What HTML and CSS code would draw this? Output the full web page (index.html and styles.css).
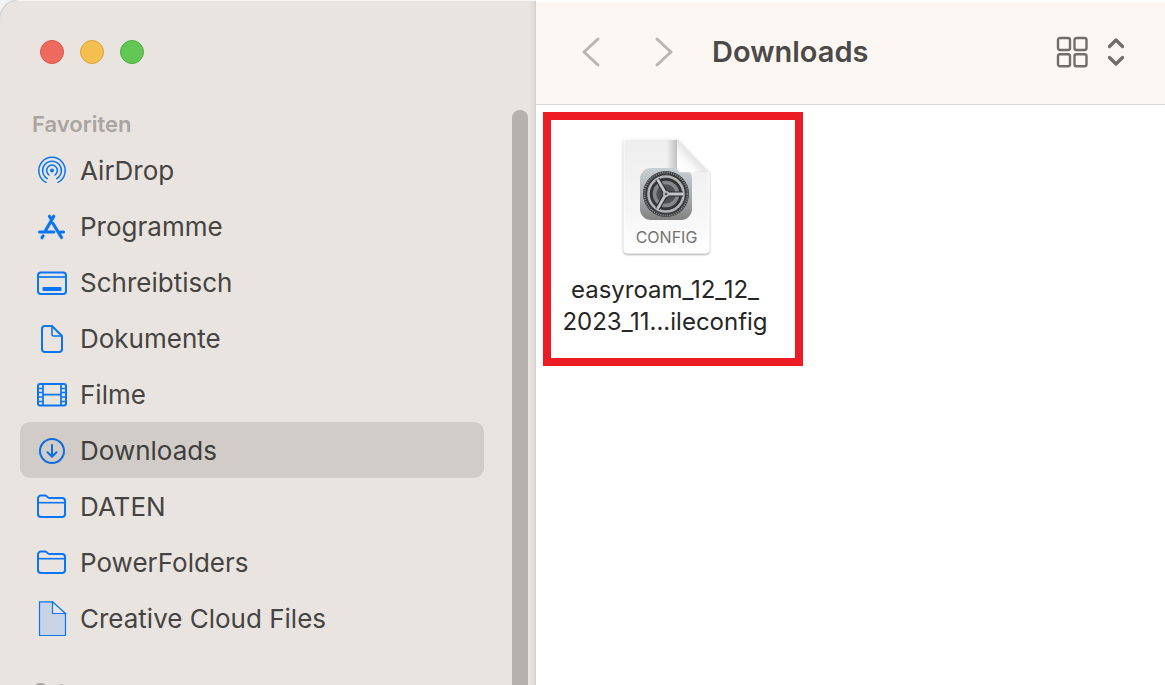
FILE: index.html
```html
<!DOCTYPE html>
<html lang="de">
<head>
<meta charset="utf-8">
<title>Downloads</title>
<link rel="stylesheet" href="styles.css">
</head>
<body>
<div class="window">
  <aside class="sidebar">
    <div class="lights">
      <button class="light light-close" aria-label="Schließen"></button>
      <button class="light light-min" aria-label="Minimieren"></button>
      <button class="light light-zoom" aria-label="Zoomen"></button>
    </div>
    <div class="side-body">
      <nav class="places">
        <h2 class="group">Favoriten</h2>
        <ul class="list">
          <li><a class="item" href="#"><svg class="icon" viewBox="0 0 32 36" fill="none" stroke="#0a75f5" stroke-width="1.500" stroke-linecap="round"><circle cx="16" cy="17.500" r="2" fill="#0a75f5" stroke="none"/><path d="M13 22a5.400 5.400 0 1 1 6 0M11.300 25.700a9.400 9.400 0 1 1 9.400 0M10 29.300a13.200 13.200 0 1 1 12 0"/></svg>AirDrop</a></li>
          <li><a class="item" href="#"><svg class="icon" viewBox="0 0 32 36" fill="none" stroke="#0a75f5" stroke-width="3.200" stroke-linecap="round"><path d="M13.500 7.300l1.800 2.800M17.800 7.300L9.600 21.500M3.500 23h14.300M24.500 23h3M17 14.500l8.500 14M7 27l-1 1.700"/></svg>Programme</a></li>
          <li><a class="item" href="#"><svg class="icon" viewBox="0 0 32 36" fill="none" stroke="#0a75f5" stroke-width="2"><rect x="2" y="7.500" width="28" height="21.500" rx="3"/><path d="M2 12h28" stroke-width="1.700"/><rect x="6.500" y="22" width="19" height="4" rx="1" fill="#0a75f5" stroke="none"/></svg>Schreibtisch</a></li>
          <li><a class="item" href="#"><svg class="icon" viewBox="0 0 32 36" fill="none" stroke="#0a75f5" stroke-width="2" stroke-linejoin="round"><path d="M9 5H16L26 15V28a3 3 0 0 1-3 3H9a3 3 0 0 1-3-3V8a3 3 0 0 1 3-3z"/><path d="M16 5V13.500a1.500 1.500 0 0 0 1.500 1.500H26" stroke-width="1.600"/></svg>Dokumente</a></li>
          <li><a class="item" href="#"><svg class="icon" viewBox="0 0 32 36" fill="none" stroke="#0a75f5" stroke-width="2"><rect x="2" y="7" width="28" height="21.500" rx="2"/><path d="M7 7.500v21M25 7.500v21M7 17.700h18M2 11.500h5M2 15.500h5M2 20h5M2 24.500h5M25 11.500h5M25 15.500h5M25 20h5M25 24.500h5" stroke-width="1.700"/></svg>Filme</a></li>
          <li><a class="item item-active" href="#" aria-current="page"><svg class="icon" viewBox="0 0 32 36" fill="none" stroke="#0a6de6" stroke-width="2" stroke-linecap="round" stroke-linejoin="round"><circle cx="16" cy="18" r="12"/><path d="M16 12v11.500M11.500 19.200l4.500 4.600 4.500-4.600"/></svg>Downloads</a></li>
          <li><a class="item" href="#"><svg class="icon" viewBox="0 0 32 36" fill="none" stroke="#0a75f5" stroke-width="2" stroke-linejoin="round"><path d="M2 9.500a3 3 0 0 1 3-3h4.200c1.500 0 2.300 2.400 4 2.400H26a3 3 0 0 1 3 3V25a3 3 0 0 1-3 3H5a3 3 0 0 1-3-3z"/><path d="M2 13.700h27" stroke-width="1.600"/></svg>DATEN</a></li>
          <li><a class="item" href="#"><svg class="icon" viewBox="0 0 32 36" fill="none" stroke="#0a75f5" stroke-width="2" stroke-linejoin="round"><path d="M2 9.500a3 3 0 0 1 3-3h4.200c1.500 0 2.300 2.400 4 2.400H26a3 3 0 0 1 3 3V25a3 3 0 0 1-3 3H5a3 3 0 0 1-3-3z"/><path d="M2 13.700h27" stroke-width="1.600"/></svg>PowerFolders</a></li>
          <li><a class="item" href="#"><svg class="icon" viewBox="0 0 32 36" stroke="#0a75f5" stroke-width="1.200"><path d="M3.500 .800H16.500L29.500 13.500V34.500H3.500z" fill="#c8d3e4"/><path d="M16.500 .800V12.500H29.500z" fill="#e9e4e0"/></svg>Creative Cloud Files</a></li>
        </ul>
        <h2 class="group group-next">Orte</h2>
      </nav>
      <div class="scroll-thumb"></div>
    </div>
  </aside>
  <main class="main">
    <header class="toolbar">
      <button class="tool" aria-label="Zurück"><svg width="24" height="32" viewBox="0 0 24 32" fill="none" stroke="#bab5b1" stroke-width="3" stroke-linecap="round" stroke-linejoin="round"><path d="M18 3L4 16l14 13"/></svg></button>
      <button class="tool tool-next" aria-label="Vorwärts"><svg width="24" height="32" viewBox="0 0 24 32" fill="none" stroke="#bab5b1" stroke-width="3" stroke-linecap="round" stroke-linejoin="round"><path d="M5 3l14 13L5 29"/></svg></button>
      <h1 class="title">Downloads</h1>
      <button class="tool view" aria-label="Darstellung"><svg width="72" height="32" viewBox="0 0 72 32" fill="none" stroke="#736d69" stroke-width="2.400" stroke-linecap="round" stroke-linejoin="round"><rect x="2" y="2" width="12" height="12" rx="2"/><rect x="18.500" y="2" width="12" height="12" rx="2"/><rect x="2" y="18.200" width="12" height="12" rx="2"/><rect x="18.500" y="18.200" width="12" height="12" rx="2"/><path d="M53.500 10.500l6.500-6.500 6.500 6.500M53.500 21.500l6.500 6.500 6.500-6.500" stroke-width="3.200"/></svg></button>
    </header>
    <section class="files">
      <figure class="file">
        <svg class="file-icon" width="96" height="124" viewBox="-1 0 96 124">
          <defs>
            <linearGradient id="page" x1="0" y1="0" x2="0" y2="1"><stop offset="0" stop-color="#eee"/><stop offset=".6" stop-color="#f5f5f5"/><stop offset="1" stop-color="#fff"/></linearGradient>
            <linearGradient id="crease" x1="0" x2="1"><stop offset="0" stop-color="#999" stop-opacity="0"/><stop offset="1" stop-color="#999" stop-opacity=".55"/></linearGradient>
            <linearGradient id="fold" x1="0" y1="1" x2=".6" y2=".4"><stop offset="0" stop-color="#fff"/><stop offset=".5" stop-color="#fafafa"/><stop offset="1" stop-color="#d8d8d8"/></linearGradient>
            <linearGradient id="plate" x1="0" y1="0" x2="0" y2="1"><stop offset="0" stop-color="#c7d0d5"/><stop offset=".5" stop-color="#adb0b2"/><stop offset="1" stop-color="#818181"/></linearGradient>
            <filter id="shade" x="-10%" y="-10%" width="120%" height="120%"><feDropShadow dx="0" dy="1" stdDeviation="1" flood-opacity=".45"/></filter>
          </defs>
          <path d="M9 4H59L91 37V115a3 3 0 0 1-3 3H9a3 3 0 0 1-3-3V7a3 3 0 0 1 3-3z" fill="url(#page)" stroke="#fff" stroke-width=".8" filter="url(#shade)"/>
          <path d="M49 5H59V37H49z" fill="url(#crease)"/>
          <path d="M59 37H90l-20-4z" fill="#999" opacity=".35"/>
          <rect x="22" y="33" width="52" height="52" rx="11" fill="url(#plate)"/>
          <path d="M59 4L91 37C80 36 68 38 62 37Q59 36 59 32z" fill="url(#fold)"/>
          <circle cx="48" cy="59" r="23" fill="#3a3b3c"/>
          <circle cx="48" cy="59" r="21.500" fill="none" stroke="#8b8e90" stroke-width="1.800" stroke-dasharray="1.100 1.150"/>
          <circle cx="48" cy="59" r="17.500" fill="#333435" stroke="#b2b5b7" stroke-width="2.600"/>
          <circle cx="48" cy="59" r="11.500" fill="#505254" stroke="#85888a" stroke-width="3.600"/>
          <circle cx="48" cy="59" r="6.500" fill="#484a4b"/>
          <path d="M48 59H65M48 59L39.500 44.300M48 59L39.500 73.700" stroke="#292a2b" stroke-width="5"/>
          <path d="M48 59H65M48 59L39.500 44.300M48 59L39.500 73.700" stroke="#c3c6c8" stroke-width="2.800"/>
          <circle cx="48" cy="59" r="3" fill="#b8bbbd"/><circle cx="48" cy="59" r="1.300" fill="#555"/>
          <text class="file-kind" x="48.500" y="108" text-anchor="middle">CONFIG</text>
        </svg>
        <figcaption class="file-name">easyroam_12_12_<br>2023_11...ileconfig</figcaption>
      </figure>
    </section>
  </main>
</div>
</body>
</html>
```
FILE: styles.css
```css
* { box-sizing: border-box; }
body {
  margin: 0;
  background: #f3f3f3;
  font-family: Inter, "Liberation Sans", sans-serif;
  color: #464442;
}
button { border: 0; padding: 0; background: none; }
.window {
  display: flex;
  height: 100vh;
  overflow: hidden;
  border-radius: 20px 0 0 0;
  background: #e9e4e0;
  box-shadow: 0 0 2px #777;
}
.sidebar {
  display: flex;
  flex-direction: column;
  flex: 0 0 536px;
  border-top: 1px solid #f8f6f5;
  background: linear-gradient(to left, #d2cdc9, #e0dbd7 2px, #e9e4e0 7px);
}
.lights {
  display: flex;
  flex: none;
  gap: 16px;
  height: 109px;
  padding: 39px 40px 0;
}
.light { width: 24px; height: 24px; border: 1px solid; border-radius: 50%; }
.light-close { background: #ed6a5f; border-color: #d9534a; }
.light-min { background: #f5bf50; border-color: #d9a13c; }
.light-zoom { background: #62c655; border-color: #4bab3d; }
.side-body { display: flex; flex: 1; min-height: 0; padding-right: 8px; }
.places { flex: 1; padding: 0 28px 0 20px; overflow: hidden; }
.group {
  margin: 0;
  padding-left: 12px;
  font-size: 22px;
  line-height: 28px;
  font-weight: 600;
  color: #aaa5a1;
}
.group-next { margin-top: 31px; }
.list { margin: 0; padding: 4px 0 0; list-style: none; }
.item {
  display: flex;
  align-items: center;
  gap: 12px;
  height: 56px;
  padding: 2px 0 0 16px;
  border-radius: 10px;
  font-size: 26px;
  line-height: 32px;
  color: inherit;
  text-decoration: none;
}
.item-active { background: #d1ccc8; color: #403e3c; }
.icon { flex: none; width: 32px; height: 36px; }
.scroll-thumb { width: 16px; border-radius: 8px 8px 0 0; background: #b5b1ae; }
.main { flex: 1; min-width: 0; background: #fff; }
.toolbar {
  display: flex;
  align-items: center;
  height: 105px;
  padding: 0 37px 2px 44px;
  border-top: 2px solid #fff;
  border-bottom: 1px solid #d9d6d4;
  background: #fcf7f3;
}
.tool { display: flex; }
.tool-next { margin-left: 48px; }
.title {
  margin: 0 0 0 36px;
  font-size: 29px;
  line-height: 36px;
  font-weight: 600;
  color: #4c4a48;
}
.view { margin-left: auto; }
.files { display: flex; padding: 7px; }
.file {
  display: flex;
  flex-direction: column;
  align-items: center;
  width: 260px;
  margin: 0;
  padding: 15px 16px 20px 0;
  border: 8px solid #ed1c24;
}
.file-kind { font-size: 16px; fill: #747474; }
.file-name {
  margin-top: 15px;
  font-size: 24px;
  line-height: 32px;
  text-align: center;
  color: #262626;
}
```
